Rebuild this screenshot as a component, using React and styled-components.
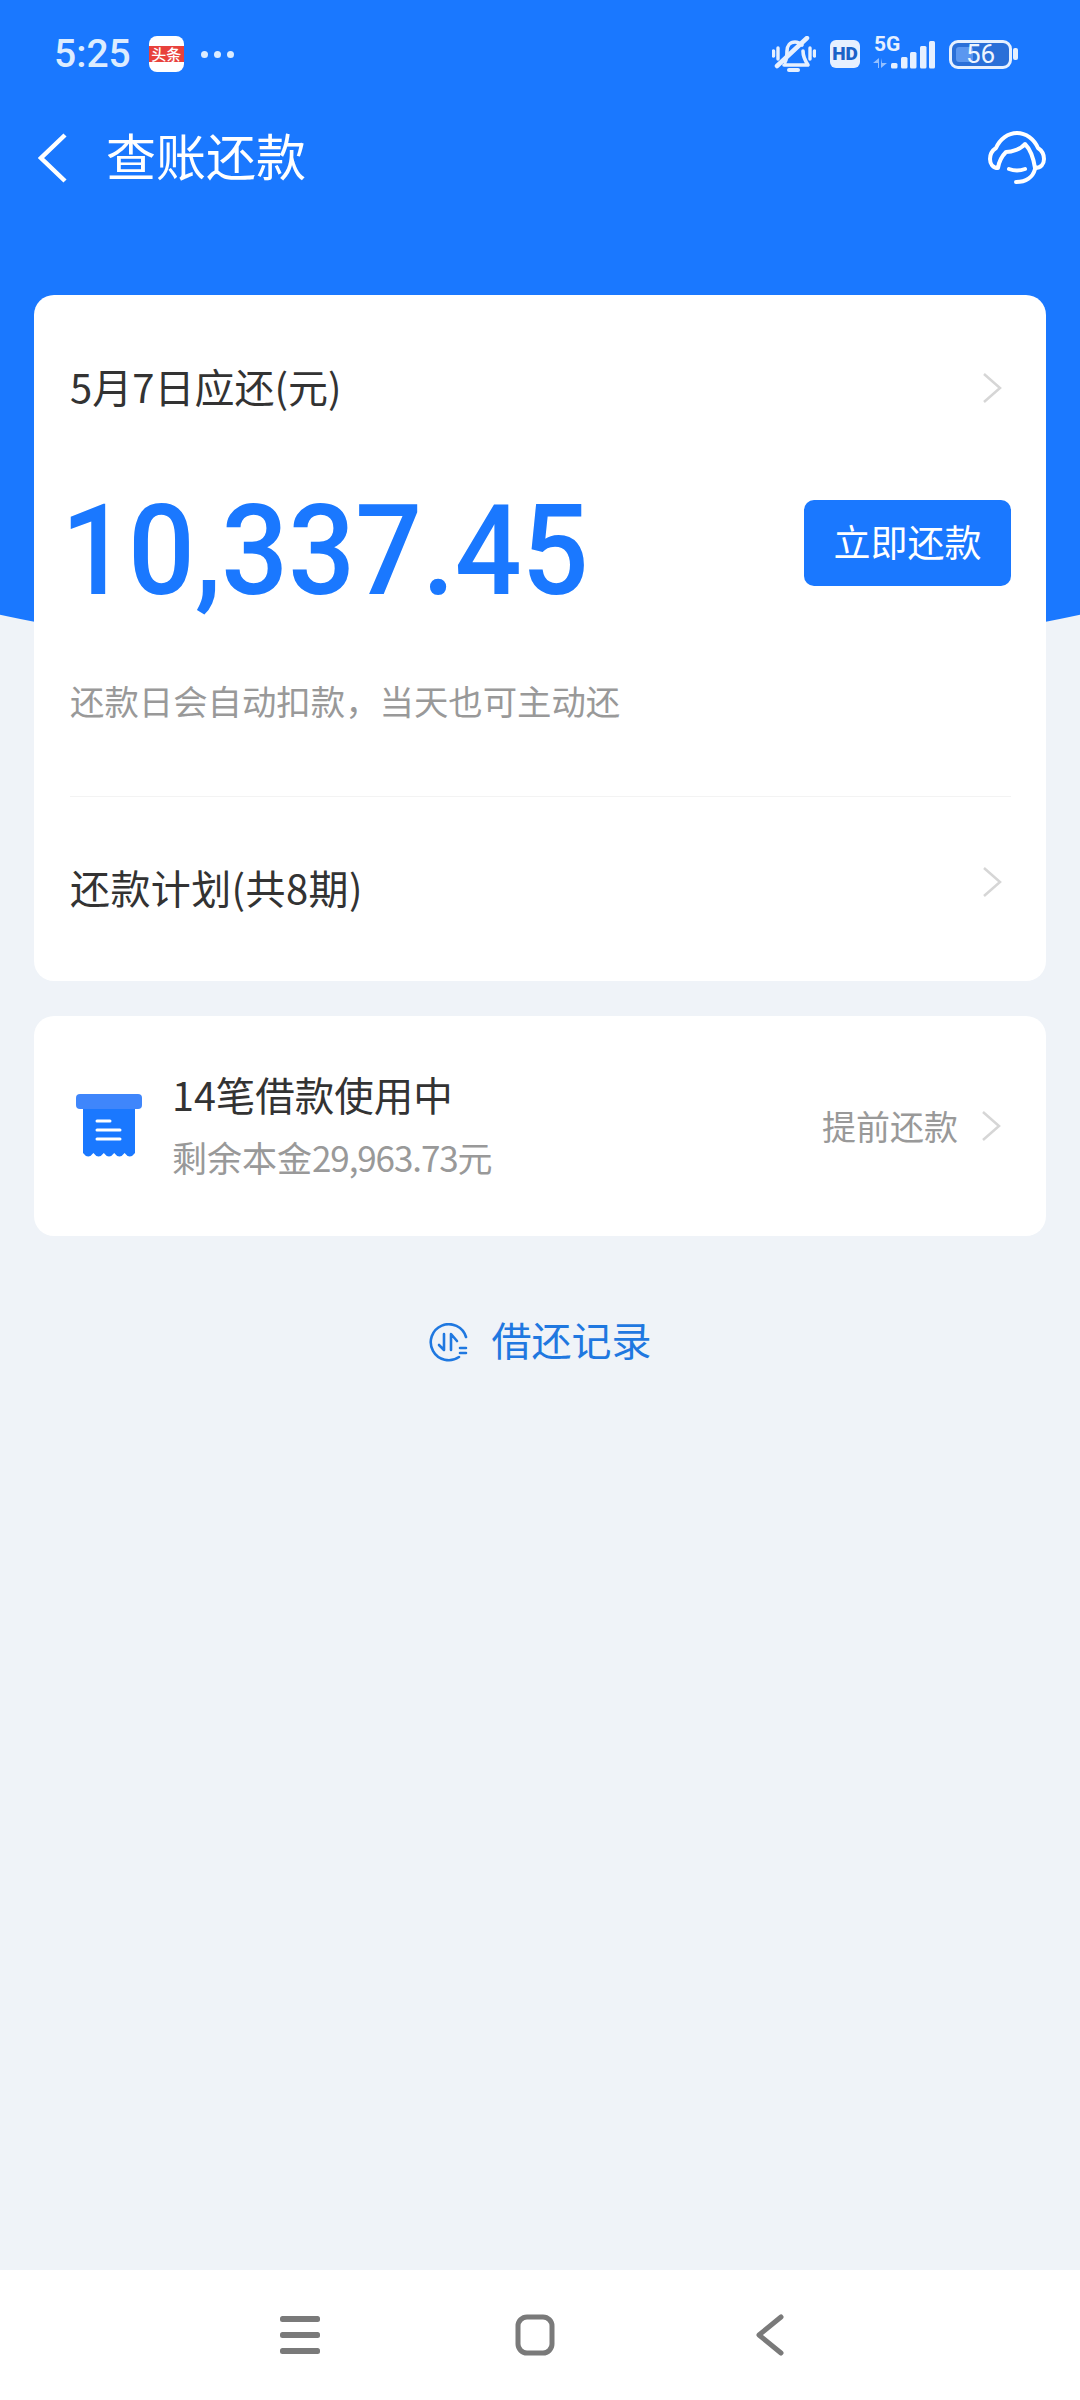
import React from "react";
import styled, { createGlobalStyle } from "styled-components";

const GlobalStyle = createGlobalStyle`
  html, body {
    margin: 0;
    padding: 0;
    background: #eff3f8;
    font-family: "Noto Sans CJK SC", "Noto Sans", sans-serif;
  }
`;

const Page = styled.div`
  width: 1080px;
  height: 2400px;
  display: flex;
  flex-direction: column;
  overflow: hidden;
  background: #eff3f8;
`;

const Hero = styled.header`
  height: 670px;
  flex: none;
  background: #1a78ff;
  clip-path: ellipse(1358px 670px at 50% 0);
`;

const StatusBar = styled.div`
  height: 108px;
  padding: 0 62px 0 54px;
  display: flex;
  align-items: center;
  justify-content: space-between;
  box-sizing: border-box;
`;

const StatusLeft = styled.div`
  display: flex;
  align-items: center;
`;

const Clock = styled.span`
  font-family: Roboto, sans-serif;
  font-weight: 500;
  font-size: 39px;
  color: #dcecff;
  line-height: 1;
`;

const AppBadge = styled.div`
  width: 35px;
  height: 36px;
  margin-left: 18px;
  border-radius: 8px;
  background: #fff;
  display: flex;
  align-items: center;
`;

const AppBadgeLabel = styled.span`
  width: 100%;
  height: 16px;
  background: #e8413c;
  color: #fff;
  font-size: 15px;
  font-weight: 500;
  line-height: 16px;
  text-align: center;
`;

const Dots = styled.div`
  display: flex;
  gap: 6px;
  margin-left: 17px;
`;

const Dot = styled.i`
  width: 7px;
  height: 7px;
  border-radius: 50%;
  background: #dcecff;
`;

const StatusRight = styled.div`
  display: flex;
  align-items: center;
`;

const HdBadge = styled.span`
  width: 30px;
  height: 28px;
  margin-left: 14px;
  border-radius: 6px;
  background: #e6f0ff;
  color: #1a62c8;
  font-family: Roboto, sans-serif;
  font-weight: 900;
  font-size: 19px;
  line-height: 28px;
  text-align: center;
`;

const NetworkBlock = styled.div`
  width: 62px;
  height: 32px;
  margin: -2px 0 0 13px;
  position: relative;
`;

const NetworkLabel = styled.span`
  position: absolute;
  left: 1px;
  top: -3px;
  font-family: Roboto, sans-serif;
  font-weight: 700;
  font-size: 21px;
  line-height: 21px;
  color: #e6f0ff;
`;

const Battery = styled.div`
  width: 63px;
  height: 29px;
  margin-left: 14px;
  box-sizing: border-box;
  border: 3px solid #e6f0ff;
  border-radius: 9px;
  background: #2a6fd8;
  display: flex;
  align-items: center;
  justify-content: center;
  position: relative;
`;

const BatteryFill = styled.i`
  position: absolute;
  left: 4px;
  top: 4px;
  bottom: 4px;
  width: 17px;
  border-radius: 3px;
  background: #5b97f0;
`;

const BatteryValue = styled.span`
  position: relative;
  font-family: Roboto, sans-serif;
  font-size: 26px;
  line-height: 1;
  color: #eef5ff;
`;

const BatteryCap = styled.i`
  width: 5px;
  height: 12px;
  margin-left: 1px;
  border-radius: 2px;
  background: #e6f0ff;
`;

const TitleBar = styled.div`
  height: 100px;
  padding: 0 34px 0 38px;
  display: flex;
  align-items: center;
  box-sizing: border-box;
`;

const Title = styled.h1`
  margin: 0 0 8px 38px;
  font-size: 50px;
  font-weight: 400;
  color: #fff;
  line-height: 1;
  flex: 1;
`;

const Main = styled.main`
  position: relative;
  flex: 1;
  margin-top: -375px;
  padding: 0 34px;
  display: flex;
  flex-direction: column;
  min-height: 0;
`;

const Card = styled.section`
  background: #fff;
  border-radius: 20px;
  padding: 0 35px 0 36px;
`;

const DueCard = styled(Card)`
  height: 686px;
  box-sizing: border-box;
`;

const RowBetween = styled.div`
  height: ${(p) => p.$height}px;
  display: flex;
  align-items: center;
  justify-content: space-between;
`;

const Label = styled.span`
  font-size: 40px;
  color: #333;
  line-height: 1;
  padding-bottom: ${(p) => (p.$wide ? "3px" : "5px")};
  letter-spacing: ${(p) => (p.$wide ? "0.4px" : "0")};
`;

const Amount = styled.span`
  display: block;
  font-family: Roboto, sans-serif;
  font-weight: 500;
  font-size: 126px;
  line-height: 1;
  color: #1a78ff;
  margin: 16px 0 0 -9px;
  transform: scaleX(0.935);
  transform-origin: left center;
`;

const PayButton = styled.button`
  width: 207px;
  height: 86px;
  border: none;
  border-radius: 10px;
  background: #1a78ff;
  color: #fff;
  font-family: inherit;
  font-size: 37px;
  padding: 0 0 5px;
`;

const Hint = styled.p`
  margin: 65px 0 0;
  height: 60px;
  font-size: 34.4px;
  line-height: 60px;
  color: #999;
  white-space: nowrap;
`;

const Divider = styled.hr`
  margin: 66px 0 0;
  border: none;
  height: 1px;
  background: #f3f3f3;
`;

const ChevronIcon = styled.svg`
  width: 22px;
  height: 34px;
  flex: none;
  margin: ${(p) => (p.$raised ? "-14px 8px 0 0" : "0 8px 0 0")};
`;

const LoanCard = styled(Card)`
  height: 220px;
  margin-top: 35px;
  padding: 0 36px 0 42px;
  display: flex;
  align-items: center;
`;

const LoanText = styled.div`
  flex: 1;
  margin-left: 30px;
  display: flex;
  flex-direction: column;
  gap: 13px;
`;

const LoanTitle = styled.span`
  font-size: 39.5px;
  line-height: 50px;
  color: #333;
  margin-top: -2px;
`;

const LoanSub = styled.span`
  font-size: 35px;
  line-height: 50px;
  color: #999;
`;

const LoanDigits = styled.span`
  letter-spacing: -1.1px;
`;

const Prepay = styled.span`
  font-size: 34px;
  color: #999;
  margin-right: 22px;
  padding-bottom: 2px;
`;

const HistoryLink = styled.a`
  margin-top: 76px;
  height: 60px;
  display: flex;
  align-items: center;
  justify-content: center;
  gap: 24px;
  font-size: 40px;
  color: #1f78e0;
`;

const HistoryText = styled.span`
  line-height: 1;
  padding-bottom: 6px;
`;

const NavBar = styled.nav`
  flex: none;
  height: 130px;
  background: #fff;
  padding-right: 10px;
  display: flex;
  justify-content: center;
  align-items: center;
`;

const NavCell = styled.div`
  width: 235px;
  display: flex;
  justify-content: center;
`;

function Chevron({ raised }) {
  return (
    <ChevronIcon $raised={raised} viewBox="0 0 22 34" fill="none">
      <path d="M3 3 L19 17 L3 31" stroke="#d6d6d6" strokeWidth="2.5" />
    </ChevronIcon>
  );
}

function BellOff() {
  return (
    <svg width="44" height="37" viewBox="0 0 44 37" fill="none" stroke="#e6f0ff" strokeLinecap="round" strokeLinejoin="round">
      <path d="M1.500 15v5M6 12v11M38 12v11M42.500 15v5" strokeWidth="3.4" />
      <path d="M13 26c2-3 2-6 2-11 0-5 3-9 8-9 3 0 5 1 7 3M31 15c0 5 1 8 5 14H12" strokeWidth="3.6" />
      <path d="M5 30L35 2" strokeWidth="4.5" />
      <path d="M17 34h9" strokeWidth="4" />
    </svg>
  );
}

function Signal() {
  return (
    <svg width="62" height="32" viewBox="0 0 62 32" fill="#e6f0ff">
      <path d="M5 31v-5H0l6-5v10zM8 21v10l6-5H9z" opacity="0.6" />
      <rect x="18" y="26" width="6.500" height="5.500" rx="1.500" />
      <rect x="28" y="20" width="6.500" height="11.500" rx="1.500" />
      <rect x="37" y="15" width="6.500" height="16.500" rx="1.500" />
      <rect x="47" y="9" width="6.500" height="22.500" rx="1.500" />
      <rect x="56" y="4" width="6" height="27.500" rx="1.500" />
    </svg>
  );
}

function BackArrow() {
  return (
    <svg width="30" height="50" viewBox="0 0 30 50" fill="none">
      <path d="M27 2 L3 25 L27 48" stroke="#fff" strokeWidth="4.5" />
    </svg>
  );
}

function Headset() {
  return (
    <svg width="58" height="54" viewBox="0 0 58 54" fill="none" stroke="#fff" strokeWidth="4" strokeLinecap="round" strokeLinejoin="round">
      <path d="M10 37C5 37 2 33 2 28 2 22 5 19 8 17 12 8 20 2 29 2s17 6 21 15c3 2 6 5 6 11 0 5-3 9-9 9-2-13-5-19-10-24-4 5-13 8-19 8-4 4-7 9-8 16z" />
      <path d="M21 38c5 2 11 2 16 0" />
      <path d="M47 38c-2 8-9 13-19 13" />
    </svg>
  );
}

function ReceiptIcon() {
  return (
    <svg width="66" height="64" viewBox="0 0 66 64">
      <rect x="0" y="0" width="66" height="15" rx="4" fill="#3f86fb" />
      <path
        d="M7 15h52v44q-5.200 7-10.400 0q-5.200 7-10.400 0q-5.200 7-10.400 0q-5.200 7-10.400 0q-5.200 7-10.400 0z"
        fill="#1a78ff"
      />
      <path d="M21 27h13M21 36h23M21 45h23" stroke="#fff" strokeWidth="3" strokeLinecap="round" />
    </svg>
  );
}

function HistoryIcon() {
  return (
    <svg width="39" height="39" viewBox="0 0 39 39" fill="none" stroke="#1f78e0" strokeWidth="2.6" strokeLinecap="round" strokeLinejoin="round">
      <path d="M37 14A18 18 0 1 0 30 34" />
      <path d="M15 11v16M10 22l5 5M22 27V11l6 7" />
      <path d="M31 25h6M31 30h6" />
    </svg>
  );
}

function NavMenu() {
  return (
    <svg width="40" height="38" viewBox="0 0 40 38" fill="#7a7a7a">
      <rect x="0" y="0" width="40" height="6" rx="2.500" />
      <rect x="0" y="16" width="40" height="6" rx="2.500" />
      <rect x="0" y="32" width="40" height="6" rx="2.500" />
    </svg>
  );
}

function NavHome() {
  return (
    <svg width="40" height="42" viewBox="0 0 40 42" fill="none">
      <rect x="3" y="3" width="34" height="36" rx="9" stroke="#7a7a7a" strokeWidth="5" />
    </svg>
  );
}

function NavBack() {
  return (
    <svg width="28" height="42" viewBox="0 0 28 42" fill="none">
      <path d="M25 3 L3 21 L25 39" stroke="#7a7a7a" strokeWidth="5" strokeLinecap="round" strokeLinejoin="round" />
    </svg>
  );
}

export default function App() {
  return (
    <Page>
      <GlobalStyle />
      <Hero>
        <StatusBar>
          <StatusLeft>
            <Clock>5:25</Clock>
            <AppBadge>
              <AppBadgeLabel>头条</AppBadgeLabel>
            </AppBadge>
            <Dots>
              <Dot />
              <Dot />
              <Dot />
            </Dots>
          </StatusLeft>
          <StatusRight>
            <BellOff />
            <HdBadge>HD</HdBadge>
            <NetworkBlock>
              <NetworkLabel>5G</NetworkLabel>
              <Signal />
            </NetworkBlock>
            <Battery>
              <BatteryFill />
              <BatteryValue>56</BatteryValue>
            </Battery>
            <BatteryCap />
          </StatusRight>
        </StatusBar>
        <TitleBar>
          <BackArrow />
          <Title>查账还款</Title>
          <Headset />
        </TitleBar>
      </Hero>
      <Main>
        <DueCard>
          <RowBetween $height={186}>
            <Label>5月7日应还(元)</Label>
            <Chevron />
          </RowBetween>
          <RowBetween $height={124}>
            <Amount>10,337.45</Amount>
            <PayButton>立即还款</PayButton>
          </RowBetween>
          <Hint>还款日会自动扣款，当天也可主动还</Hint>
          <Divider />
          <RowBetween $height={183}>
            <Label $wide>还款计划(共8期)</Label>
            <Chevron raised />
          </RowBetween>
        </DueCard>
        <LoanCard>
          <ReceiptIcon />
          <LoanText>
            <LoanTitle>14笔借款使用中</LoanTitle>
            <LoanSub>
              剩余本金<LoanDigits>29,963.73</LoanDigits>元
            </LoanSub>
          </LoanText>
          <Prepay>提前还款</Prepay>
          <Chevron />
        </LoanCard>
        <HistoryLink>
          <HistoryIcon />
          <HistoryText>借还记录</HistoryText>
        </HistoryLink>
      </Main>
      <NavBar>
        <NavCell>
          <NavMenu />
        </NavCell>
        <NavCell>
          <NavHome />
        </NavCell>
        <NavCell>
          <NavBack />
        </NavCell>
      </NavBar>
    </Page>
  );
}
